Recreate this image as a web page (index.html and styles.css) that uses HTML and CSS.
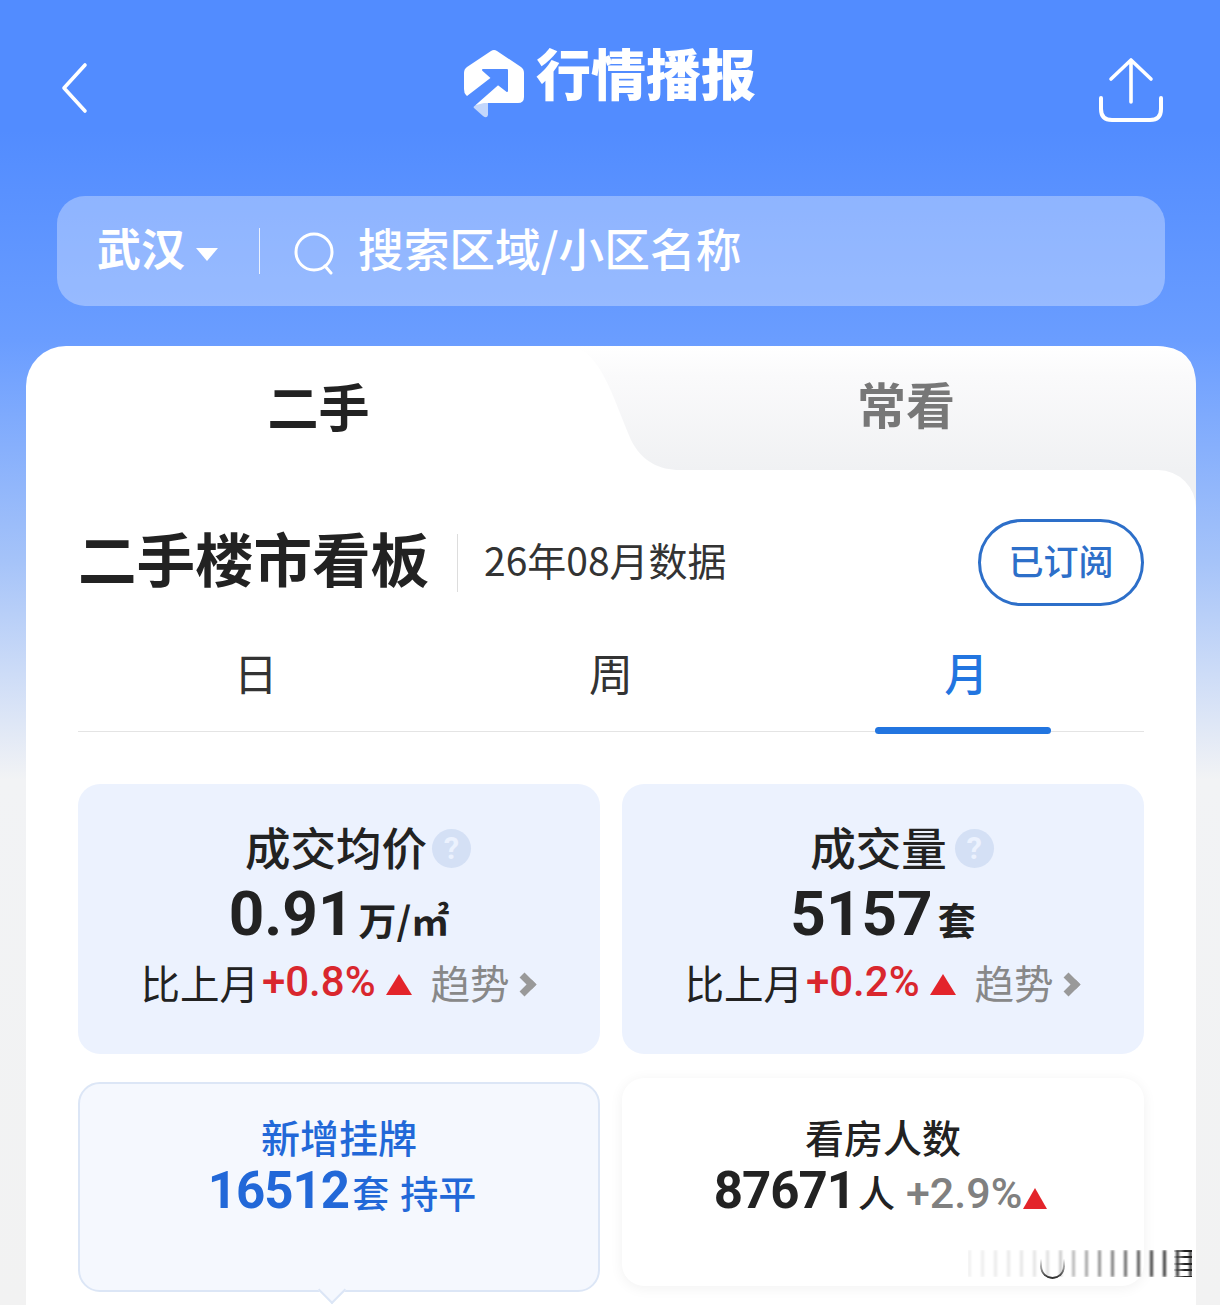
FILE: index.html
```html
<!DOCTYPE html>
<html lang="zh-CN">
<head>
    <meta charset="UTF-8">
    <meta name="viewport" content="width=device-width, initial-scale=1.0">
    <title>行情播报</title>
    <link rel="stylesheet" href="styles.css">
</head>
<body>
    <div class="page">
        <div class="topbar">
            <svg class="back-icon" viewBox="0 0 28 52" width="28" height="52">
                <path d="M25 3 L4 26 L25 49" fill="none" stroke="#fff" stroke-width="3.6" stroke-linecap="round" stroke-linejoin="round"/>
            </svg>
            <div class="brand">
                <svg class="logo" viewBox="462 48 64 72" width="64" height="72">
                    <path d="M475 104 L488 100 L488 115 Q487 119 483 116 L474 108 Q472 105 475 104Z" fill="#c3d7fc"/>
                    <path d="M491 51 Q494 49 497 51 L521 67 Q524 69 524 73 V97 Q524 103 518 103 H484 L476 105 L466 95 Q464 93 464 89 V73 Q464 69 467 67Z" fill="#fff"/>
                    <path d="M483 70 H507 V91 L498 84 L473 106 L466 98 L492 78Z" fill="#528cff" stroke="#528cff" stroke-width="2" stroke-linejoin="round"/>
                </svg>
                <span class="brand-name">行情播报</span>
            </div>
            <svg class="share-icon" viewBox="0 0 66 66" width="66" height="66">
                <path d="M33 45 V3 M13 22 L33 3 L53 22" fill="none" stroke="#fff" stroke-width="3.6" stroke-linecap="round" stroke-linejoin="round"/>
                <path d="M3 41 V52 Q3 63 14 63 H52 Q63 63 63 52 V41" fill="none" stroke="#fff" stroke-width="4" stroke-linecap="round"/>
            </svg>
        </div>

        <div class="search">
            <span class="city">武汉</span>
            <span class="caret"></span>
            <span class="search-sep"></span>
            <svg class="search-icon" viewBox="0 0 42 44" width="42" height="44">
                <circle cx="20" cy="21" r="18" fill="none" stroke="#fff" stroke-width="3"/>
                <path d="M31 35 L37 42" stroke="#fff" stroke-width="3" stroke-linecap="round"/>
            </svg>
            <span class="placeholder">搜索区域/小区名称</span>
        </div>

        <div class="sheet">
            <div class="house-tabs">
                <svg class="tab-shape" viewBox="0 0 1170 164" width="1170" height="164">
                    <defs>
                        <linearGradient id="tabfade" gradientUnits="userSpaceOnUse" x1="0" y1="0" x2="0" y2="124">
                            <stop offset="0" stop-color="#ffffff"/>
                            <stop offset="0.25" stop-color="#fafafb"/>
                            <stop offset="1" stop-color="#f0f1f3"/>
                        </linearGradient>
                    </defs>
                    <path d="M544 0 C574 4 586 49 605 94 C616 116 634 124 654 124 H1130 V164 H1170 V40 Q1170 0 1130 0Z" fill="url(#tabfade)"/>
                </svg>
                <div class="house-tab active">二手</div>
                <div class="house-tab">常看</div>
            </div>

            <div class="panel">
                <div class="board-head">
                    <h1>二手楼市看板</h1>
                    <span class="board-date">26年08月数据</span>
                    <span class="sub-btn">已订阅</span>
                </div>

                <div class="period-tabs">
                    <div class="period">日</div>
                    <div class="period">周</div>
                    <div class="period on">月</div>
                </div>

                <div class="stat-grid">
                    <div class="stat">
                        <div class="stat-title">成交均价<span class="help">?</span></div>
                        <div class="stat-value">0.91<span class="unit">万/㎡</span></div>
                        <div class="stat-delta">比上月<b class="up">+0.8%</b><i class="tri"></i><span class="trend">趋势</span><i class="chev"></i></div>
                    </div>
                    <div class="stat">
                        <div class="stat-title">成交量<span class="help wide">?</span></div>
                        <div class="stat-value">5157<span class="unit">套</span></div>
                        <div class="stat-delta">比上月<b class="up">+0.2%</b><i class="tri"></i><span class="trend">趋势</span><i class="chev"></i></div>
                    </div>
                    <div class="mini mini-on">
                        <div class="mini-title">新增挂牌</div>
                        <div class="mini-value">16512<span class="mini-unit">套</span><span class="mini-flat">持平</span></div>
                    </div>
                    <div class="mini mini-plain">
                        <div class="mini-title">看房人数</div>
                        <div class="mini-value">87671<span class="mini-unit">人</span><span class="mini-pct">+2.9%</span><i class="tri small"></i></div>
                    </div>
                </div>
            </div>
        </div>

        <div class="watermark">
            <div class="wm-bars"></div>
            <div class="wm-cup"></div>
            <div class="wm-lines"></div>
        </div>
    </div>
</body>
</html>
```

FILE: styles.css
```css
* {
    box-sizing: border-box;
}
body {
    margin: 0;
    font-family: "Noto Sans CJK SC", "Noto Sans", sans-serif;
    color: #222;
}
.page {
    position: relative;
    width: 1220px;
    height: 1305px;
    overflow: hidden;
    background: linear-gradient(180deg, #528cff 0, #528cff 130px, #6a9dff 340px, #a5c3f9 560px, #f2f3f5 780px, #f2f2f2 100%);
}

/* top bar */
.topbar {
    display: flex;
    align-items: flex-start;
    justify-content: space-between;
    height: 196px;
    padding: 57px 56px 0 60px;
}
.back-icon {
    margin-top: 5px;
}
.brand {
    display: flex;
    align-items: flex-start;
    gap: 10px;
    margin-top: -9px;
    margin-left: 32px;
    color: #fff;
}
.brand-name {
    margin-top: -5px;
    font-size: 55px;
    font-weight: 900;
    line-height: 56px;
}

/* search */
.search {
    display: flex;
    align-items: center;
    height: 110px;
    margin: 0 55px 0 57px;
    padding-left: 40px;
    border-radius: 28px;
    background: rgba(255, 255, 255, 0.32);
    color: #fff;
}
.city {
    margin-bottom: 8px;
    font-size: 44px;
    font-weight: 700;
}
.caret {
    width: 0;
    height: 0;
    margin: 6px 0 0 11px;
    border-left: 11px solid transparent;
    border-right: 11px solid transparent;
    border-top: 13px solid #fff;
}
.search-sep {
    width: 1px;
    height: 46px;
    margin: 0 34px 0 41px;
    background: rgba(255, 255, 255, 0.8);
}
.search-icon {
    margin-top: 3px;
}
.placeholder {
    margin: 0 0 8px 22px;
    font-size: 45.7px;
    font-weight: 500;
}

/* sheet */
.sheet {
    margin: 40px 24px 0 26px;
    height: 1000px;
    border-radius: 40px 40px 0 0;
    background: #fff;
}
.house-tabs {
    position: relative;
    display: flex;
    height: 124px;
}
.tab-shape {
    position: absolute;
    left: 0;
    top: 0;
}
.house-tab {
    position: relative;
    width: 50%;
    padding: 22px 0 0 5px;
    text-align: center;
    font-size: 49px;
    font-weight: 700;
    line-height: 70px;
    color: #777;
}
.house-tab.active {
    padding: 24px 0 0;
    font-size: 51px;
    color: #222;
}
.panel {
    position: relative;
    padding: 49px 52px 0;
    border-radius: 0 38px 0 0;
    background: #fff;
}

/* board heading */
.board-head {
    display: flex;
    align-items: center;
    height: 87px;
}
.board-head h1 {
    height: 58px;
    margin: 0;
    padding: 0 28px 0 0;
    border-right: 1px solid #ddd;
    font-size: 58.5px;
    font-weight: 700;
    line-height: 46px;
    color: #222;
}
.board-date {
    margin: 0 0 8px 26px;
    font-size: 39px;
    color: #333;
}
.sub-btn {
    display: flex;
    align-items: center;
    justify-content: center;
    width: 166px;
    height: 87px;
    margin-left: auto;
    padding-bottom: 6px;
    border: 3px solid #2d6fc9;
    border-radius: 44px;
    font-size: 35px;
    font-weight: 500;
    color: #2d6fc9;
}

/* day / week / month */
.period-tabs {
    display: flex;
    height: 126px;
    border-bottom: 1px solid #e4e4e4;
}
.period {
    position: relative;
    flex: 1;
    padding-top: 36px;
    text-align: center;
    font-size: 44px;
    line-height: 60px;
    color: #333;
}
.period.on {
    font-weight: 500;
    color: #2275e0;
}
.period.on::after {
    content: "";
    position: absolute;
    left: 86px;
    bottom: -3px;
    width: 176px;
    height: 7px;
    border-radius: 4px;
    background: #2275e0;
}

/* stat cards */
.stat-grid {
    display: grid;
    grid-template-columns: 522px 522px;
    gap: 24px 22px;
    margin-top: 52px;
}
.stat {
    height: 270px;
    padding-top: 29px;
    border-radius: 22px;
    background: #ecf2fe;
    text-align: center;
}
.stat-title {
    display: flex;
    align-items: center;
    justify-content: center;
    padding-left: 38px;
    font-size: 45.5px;
    font-weight: 500;
    line-height: 66px;
    color: #222;
}
.help {
    display: flex;
    align-items: center;
    justify-content: center;
    width: 39px;
    height: 39px;
    margin: 4px 0 0 5px;
    border-radius: 50%;
    background: #d4e0f5;
    font-family: "Roboto", sans-serif;
    font-size: 31px;
    font-weight: 700;
    line-height: 39px;
    color: #ecf2fe;
}
.help.wide {
    margin-left: 8px;
}
.stat-value {
    display: flex;
    align-items: baseline;
    justify-content: center;
    margin-top: 2px;
    font-family: "Roboto", sans-serif;
    font-size: 62px;
    font-weight: 700;
    line-height: 66px;
    color: #222;
}
.unit {
    margin-left: 5px;
    font-family: "Noto Sans CJK SC", sans-serif;
    font-size: 38px;
    font-weight: 700;
}
.stat-delta {
    display: flex;
    align-items: center;
    justify-content: center;
    font-size: 39.5px;
    line-height: 60px;
    color: #222;
}
.up {
    margin-left: 3px;
    font-family: "Roboto", sans-serif;
    font-weight: 500;
    font-size: 42px;
    color: #d9272e;
}
.tri {
    width: 0;
    height: 0;
    margin: 4px 0 0 10px;
    border-left: 13px solid transparent;
    border-right: 13px solid transparent;
    border-bottom: 21px solid #e3242b;
}
.trend {
    margin-left: 19px;
    color: #888;
}
.chev {
    width: 17px;
    height: 17px;
    margin: 4px 5px 0 6px;
    border-top: 7px solid #999;
    border-right: 7px solid #999;
    transform: rotate(45deg);
}

/* small cards */
.mini {
    height: 210px;
    text-align: center;
}
.mini-on {
    position: relative;
    margin-top: 4px;
    padding: 23px 0 0 6px;
    border: 2px solid #dce6f6;
    border-radius: 22px;
    background: #f5f8fe;
    color: #2268d8;
}
.mini-on::after {
    content: "";
    position: absolute;
    left: 242px;
    bottom: -10px;
    width: 18px;
    height: 18px;
    border-right: 2px solid #dce6f6;
    border-bottom: 2px solid #dce6f6;
    background: #f5f8fe;
    transform: rotate(45deg);
}
.mini-on .mini-title {
    margin-left: -6px;
}
.mini-plain {
    height: 208px;
    padding: 29px 5px 0 0;
    border-radius: 22px;
    background: #fff;
    box-shadow: 0 2px 14px rgba(0, 0, 0, 0.06);
}
.mini-plain .mini-title {
    margin-right: -5px;
}
.mini-title {
    font-size: 39px;
    font-weight: 500;
    line-height: 58px;
}
.mini-value {
    display: flex;
    align-items: baseline;
    justify-content: center;
    margin-top: -4px;
    font-family: "Roboto", sans-serif;
    font-size: 51px;
    font-weight: 700;
    line-height: 60px;
    letter-spacing: -1px;
}
.mini-unit {
    margin-left: 3px;
    font-family: "Noto Sans CJK SC", sans-serif;
    font-size: 37px;
    font-weight: 500;
    letter-spacing: 0;
}
.mini-flat {
    margin-left: 11px;
    font-family: "Noto Sans CJK SC", sans-serif;
    font-size: 38px;
    font-weight: 500;
    letter-spacing: 0;
}
.mini-pct {
    margin-left: 11px;
    font-size: 43px;
    font-weight: 500;
    letter-spacing: 0;
    color: #808080;
}
.tri.small {
    align-self: center;
    margin: 12px 0 0 1px;
    border-left-width: 12px;
    border-right-width: 12px;
    border-bottom-width: 21px;
}

/* corner watermark over the card */
.watermark {
    position: absolute;
    left: 968px;
    top: 1250px;
    width: 224px;
    height: 29px;
}
.wm-bars {
    position: absolute;
    inset: 0 0 2px;
    filter: blur(1px);
    background: repeating-linear-gradient(90deg, rgba(0, 0, 0, 0.75) 0, rgba(0, 0, 0, 0.75) 3px, transparent 3px, transparent 13px);
    -webkit-mask-image: linear-gradient(90deg, rgba(0, 0, 0, 0.08), rgba(0, 0, 0, 0.15) 35%, #000 85%);
}
.wm-cup {
    position: absolute;
    left: 72px;
    top: 0;
    width: 25px;
    height: 29px;
    border: 2px solid #333;
    border-top: 0;
    border-radius: 0 0 13px 13px;
    -webkit-mask-image: linear-gradient(180deg, transparent 30%, #000 95%);
}
.wm-lines {
    position: absolute;
    right: 0;
    top: 0;
    width: 18px;
    height: 27px;
    background: repeating-linear-gradient(180deg, #222 0, #222 2px, transparent 2px, transparent 6.5px);
    -webkit-mask-image: linear-gradient(90deg, rgba(0, 0, 0, 0.2), #000 60%);
}
```
